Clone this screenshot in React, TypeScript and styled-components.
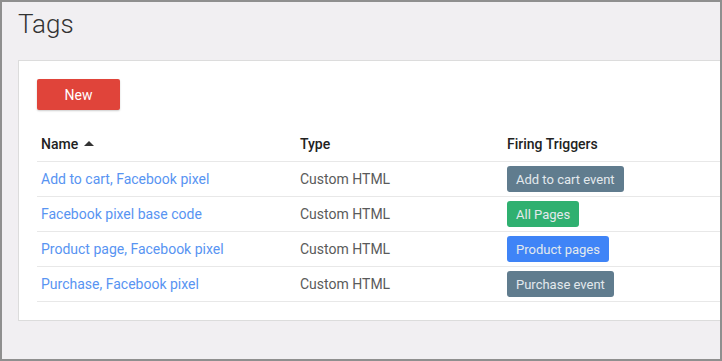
import React, {FC} from 'react';
import styled, {createGlobalStyle} from 'styled-components';

const GlobalStyle = createGlobalStyle`
    html, body {
        margin: 0;
        padding: 0;
    }
    body {
        font-family: Roboto, "Liberation Sans", Arial, sans-serif;
    }
`;

const Frame = styled.div`
    box-sizing: border-box;
    width: 722px;
    height: 361px;
    border: 2px solid #8f8f8f;
    background-color: #f1eff2;
    padding: 7px 0 0 16px;
    overflow: hidden;
    display: flex;
    flex-direction: column;
`;

const Title = styled.h1`
    margin: 0 0 21px;
    font-size: 26px;
    line-height: 30px;
    font-weight: 300;
    color: #333;
`;

const Card = styled.div`
    flex: none;
    box-sizing: border-box;
    width: 720px;
    background-color: #fff;
    border: 1px solid #dcdcdc;
    padding: 18px 0 18px 18px;
`;

const NewButton = styled.button`
    display: block;
    width: 83px;
    height: 31px;
    border: none;
    border-radius: 2px;
    background-color: #e0443a;
    color: #fff;
    font-family: inherit;
    font-size: 14px;
    box-shadow: 0 1px 2px rgba(0, 0, 0, 0.2);
    margin-bottom: 16px;
    cursor: pointer;
`;

const Row = styled.div<{ $head?: boolean }>`
    display: grid;
    grid-template-columns: 259px 207px 1fr;
    align-items: center;
    height: ${({$head}) => ($head ? '35px' : '34px')};
    padding-left: 4px;
    border-bottom: 1px solid #e8e8e8;
    font-size: 14px;
`;

const HeadCell = styled.div`
    display: flex;
    align-items: center;
    gap: 6px;
    font-weight: 500;
    color: #222;
`;

const SortArrow = styled.span`
    width: 0;
    height: 0;
    border-left: 5px solid transparent;
    border-right: 5px solid transparent;
    border-bottom: 5px solid #333;
`;

const NameLink = styled.a`
    color: #5894f2;
    text-decoration: none;
`;

const TypeCell = styled.div`
    color: #5a5a5a;
`;

const Badge = styled.span<{ $color: string }>`
    justify-self: start;
    display: inline-flex;
    align-items: center;
    height: 26px;
    padding: 0 9px;
    border-radius: 3px;
    background-color: ${({$color}) => $color};
    color: #e3e9ed;
    font-size: 13px;
`;

const tags = [
    {name: 'Add to cart, Facebook pixel', trigger: 'Add to cart event', color: '#607c8e'},
    {name: 'Facebook pixel base code', trigger: 'All Pages', color: '#2fb070'},
    {name: 'Product page, Facebook pixel', trigger: 'Product pages', color: '#3f84f7'},
    {name: 'Purchase, Facebook pixel', trigger: 'Purchase event', color: '#607c8e'},
];

const App: FC = () => {
    return (
        <>
            <GlobalStyle/>
            <Frame>
                <Title>Tags</Title>
                <Card>
                    <NewButton>New</NewButton>
                    <Row $head>
                        <HeadCell>Name <SortArrow/></HeadCell>
                        <HeadCell>Type</HeadCell>
                        <HeadCell>Firing Triggers</HeadCell>
                    </Row>
                    {tags.map((tag) => (
                        <Row key={tag.name}>
                            <NameLink href="#">{tag.name}</NameLink>
                            <TypeCell>Custom HTML</TypeCell>
                            <Badge $color={tag.color}>{tag.trigger}</Badge>
                        </Row>
                    ))}
                </Card>
            </Frame>
        </>
    );
};

export default App;
